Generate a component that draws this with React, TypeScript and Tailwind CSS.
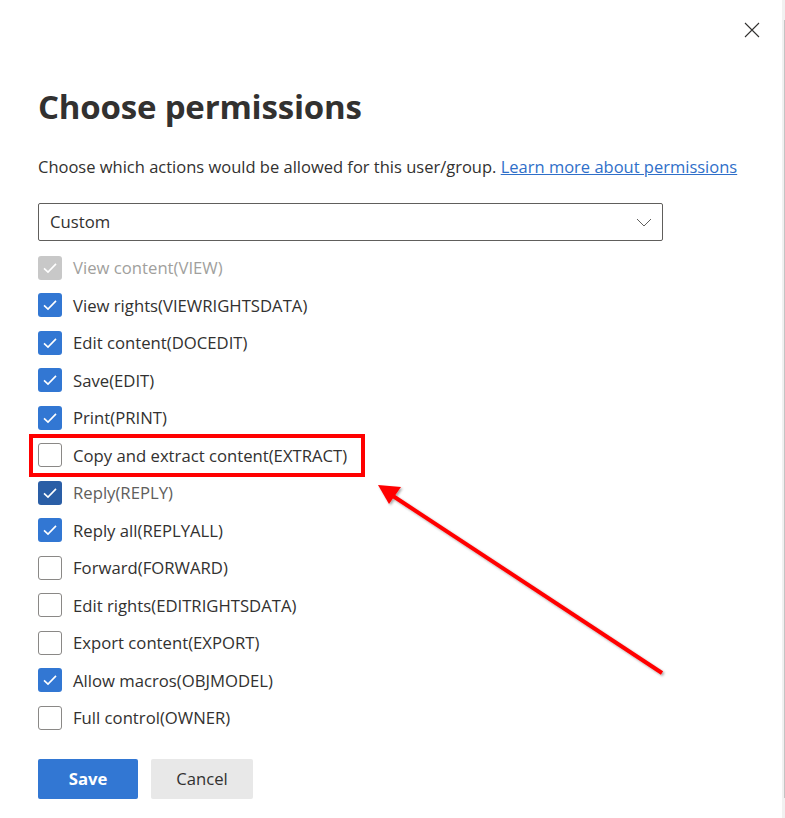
import React from "react";

const perms = [
  { label: "View content(VIEW)", state: "disabled" },
  { label: "View rights(VIEWRIGHTSDATA)", state: "checked" },
  { label: "Edit content(DOCEDIT)", state: "checked" },
  { label: "Save(EDIT)", state: "checked" },
  { label: "Print(PRINT)", state: "checked" },
  { label: "Copy and extract content(EXTRACT)", state: "off" },
  { label: "Reply(REPLY)", state: "hover" },
  { label: "Reply all(REPLYALL)", state: "checked" },
  { label: "Forward(FORWARD)", state: "off" },
  { label: "Edit rights(EDITRIGHTSDATA)", state: "off" },
  { label: "Export content(EXPORT)", state: "off" },
  { label: "Allow macros(OBJMODEL)", state: "checked" },
  { label: "Full control(OWNER)", state: "off" },
] as const;

function Check() {
  return (
    <svg viewBox="0 0 24 24" className="w-6 h-6 shrink-0">
      <path d="M6 12.3l4 3.8 8-8.2" fill="none" stroke="white" strokeWidth={1.6} />
    </svg>
  );
}

function Row({ label, state }: { label: string; state: string }) {
  const box =
    state === "disabled"
      ? "bg-[#c8c8c8]"
      : state === "checked"
      ? "bg-[#3277d3]"
      : state === "hover"
      ? "bg-[#2a5ea6]"
      : "bg-white border border-[#8a8886]";
  return (
    <div className="flex items-center h-[37.5px]">
      <div className={`w-6 h-6 shrink-0 rounded-[3px] ${box} flex items-center justify-center`}>
        {state !== "off" && <Check />}
      </div>
      <span
        className={`ml-[11px] text-[16.7px] ${
          state === "disabled" ? "text-[#a19f9d]" : state === "hover" ? "text-[#605e5c]" : "text-[#323130]"
        }`}
      >
        {label}
      </span>
    </div>
  );
}

export default function App() {
  return (
    <div
      className="relative w-[785px] h-[818px] bg-white overflow-hidden flex"
      style={{ fontFamily: '"Open Sans", "Noto Sans", sans-serif' }}
    >
      <div className="flex-1 relative">
        {/* close */}
        <button className="absolute left-[744px] top-[22px] w-4 h-4" aria-label="Close">
          <svg viewBox="0 0 16 16" className="w-4 h-4">
            <path d="M1 1l14 14M15 1L1 15" stroke="#323130" strokeWidth={1.1} fill="none" />
          </svg>
        </button>

        <div className="pl-[38px] pt-[87px]">
          <h1 className="text-[33px] leading-[40px] font-bold text-[#323130] tracking-[-0.2px]">
            Choose permissions
          </h1>
          <p className="mt-[29px] text-[16.5px] leading-[22px] text-[#323130] whitespace-nowrap">
            Choose which actions would be allowed for this user/group.{" "}
            <a className="text-[#2f6fc9] underline">Learn more about permissions</a>
          </p>

          <div className="mt-[25px] w-[625px] h-[38px] border border-[#605e5c] rounded-[2px] flex items-center justify-between pl-[11px] pr-[10px]">
            <span className="text-[16.7px] text-[#323130]">Custom</span>
            <svg viewBox="0 0 16 16" className="w-4 h-4">
              <path d="M1 5l7 7 7-7" stroke="#605e5c" strokeWidth={1} fill="none" />
            </svg>
          </div>

          <div className="mt-[8px] flex flex-col">
            {perms.map((p) => (
              <Row key={p.label} label={p.label} state={p.state} />
            ))}
          </div>

          <div className="mt-[22px] flex gap-[13px]">
            <button className="w-[100px] h-[40px] rounded-[2px] bg-[#3277d3] text-white font-bold text-[16.7px]">
              Save
            </button>
            <button className="w-[102px] h-[40px] rounded-[2px] bg-[#e8e8e8] text-[#323130] text-[16.7px]">
              Cancel
            </button>
          </div>
        </div>
      </div>

      {/* scrollbar */}
      <div className="w-[3px] h-full bg-[#f1f1f1] flex justify-end py-[20px]">
        <div className="w-px h-full bg-[#c4c4c4]" />
      </div>

      {/* annotations */}
      <div className="absolute left-[29px] top-[434px] w-[336px] h-[43px] border-4 border-[#ff0000]" />
      <svg className="absolute left-0 top-0 pointer-events-none" width="785" height="818">
        <defs>
          <filter id="sh" x="-10%" y="-10%" width="120%" height="120%">
            <feDropShadow dx="1.5" dy="1.5" stdDeviation="1" floodColor="#000" floodOpacity="0.35" />
          </filter>
        </defs>
        <g filter="url(#sh)">
          <line x1="662" y1="673" x2="393" y2="496" stroke="#ff0000" strokeWidth={4} />
          <polygon points="378,485 401,487 389,504" fill="#ff0000" />
        </g>
      </svg>
    </div>
  );
}
